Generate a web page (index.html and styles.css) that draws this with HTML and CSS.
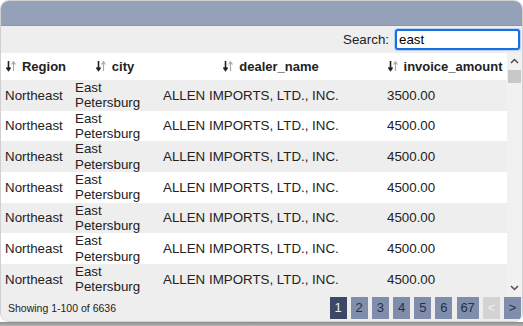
FILE: index.html
```
<!DOCTYPE html>
<html lang="en">
<head>
  <meta charset="UTF-8" />
  <title>Invoices by Dealer</title>
  <link rel="stylesheet" href="styles.css">
</head>
<body>
  <div class="grid">
    <div class="grid-title"></div>

    <div class="toolbar">
      <label for="search">Search:</label>
      <input type="text" id="search" class="search-box" value="east" />
    </div>

    <div class="grid-body">
      <div class="grid-scroll">
        <table class="data-table">
          <colgroup>
            <col class="col-region">
            <col class="col-city">
            <col class="col-dealer">
            <col class="col-amount">
          </colgroup>
          <thead>
            <tr>
              <th><span class="sort-icon"><svg width="10" height="12" viewBox="0 0 10 12"><path d="M2.5 1v9M0.5 7.5l2 2.8 2-2.8" stroke="#222" stroke-width="1.6" fill="none"/><path d="M7.5 11V2M5.5 4.5l2-2.8 2 2.8" stroke="#aaa" stroke-width="1.2" fill="none"/></svg></span>Region</th>
              <th><span class="sort-icon"><svg width="10" height="12" viewBox="0 0 10 12"><path d="M2.5 1v9M0.5 7.5l2 2.8 2-2.8" stroke="#222" stroke-width="1.6" fill="none"/><path d="M7.5 11V2M5.5 4.5l2-2.8 2 2.8" stroke="#aaa" stroke-width="1.2" fill="none"/></svg></span>city</th>
              <th><span class="sort-icon"><svg width="10" height="12" viewBox="0 0 10 12"><path d="M2.5 1v9M0.5 7.5l2 2.8 2-2.8" stroke="#222" stroke-width="1.6" fill="none"/><path d="M7.5 11V2M5.5 4.5l2-2.8 2 2.8" stroke="#aaa" stroke-width="1.2" fill="none"/></svg></span>dealer_name</th>
              <th><span class="sort-icon"><svg width="10" height="12" viewBox="0 0 10 12"><path d="M2.5 1v9M0.5 7.5l2 2.8 2-2.8" stroke="#222" stroke-width="1.6" fill="none"/><path d="M7.5 11V2M5.5 4.5l2-2.8 2 2.8" stroke="#aaa" stroke-width="1.2" fill="none"/></svg></span>invoice_amount</th>
            </tr>
          </thead>
          <tbody id="rows">
            <!-- rows filled in by the script below -->
          </tbody>
        </table>
      </div>

      <div class="scrollbar">
        <span class="sb-button"><svg width="9" height="6" viewBox="0 0 9 6"><path d="M1 5l3.5-3.5L8 5" stroke="#505050" stroke-width="1.5" fill="none"/></svg></span>
        <span class="sb-thumb"></span>
        <span class="sb-track"></span>
        <span class="sb-button"><svg width="9" height="6" viewBox="0 0 9 6"><path d="M1 1l3.5 3.5L8 1" stroke="#505050" stroke-width="1.5" fill="none"/></svg></span>
      </div>
    </div>

    <div class="grid-footer">
      <span class="summary">Showing 1-100 of 6636</span>
      <div class="pager">
        <span class="page active">1</span>
        <span class="page">2</span>
        <span class="page">3</span>
        <span class="page">4</span>
        <span class="page">5</span>
        <span class="page">6</span>
        <span class="page wide">67</span>
        <span class="page disabled">&lt;</span>
        <span class="page">&gt;</span>
      </div>
    </div>
  </div>
  <div class="page-edge"></div>

  <script>
    // rows currently in view of the first page
    const amounts = [3500, 4500, 4500, 4500, 4500, 4500, 4500];
    const tbody = document.getElementById("rows");

    amounts.forEach(amount => {
      tbody.innerHTML += `
        <tr>
          <td>Northeast</td>
          <td>East Petersburg</td>
          <td>ALLEN IMPORTS, LTD., INC.</td>
          <td>${amount.toFixed(2)}</td>
        </tr>
      `;
    });
  </script>
</body>
</html>
```

FILE: styles.css
```
body {
  margin: 0;
  padding: 0;
  background: #fff;
  font-family: 'Liberation Sans', Arial, sans-serif;
  color: #222;
}

.grid {
  height: 320px;
  display: flex;
  flex-direction: column;
  border: 1px solid #d0d0d0;
  border-radius: 9px;
  overflow: hidden;
  background: #fff;
}

.grid-title {
  height: 24px;
  flex: none;
  background: #95a1b8;
  border-bottom: 1px solid #8a95ab;
}

.toolbar {
  height: 27px;
  flex: none;
  display: flex;
  align-items: center;
  justify-content: flex-end;
  gap: 6px;
  padding-right: 2px;
  background: #eee;
  font-size: 13.33px;
}

.search-box {
  width: 117px;
  height: 15px;
  padding: 1px 2px;
  font-family: inherit;
  font-size: 13.33px;
  color: #000;
  border: 2px solid #1a6ee0;
  border-radius: 3px;
  box-shadow: 0 0 0 1px #b9d3f5;
  outline: none;
}

.grid-body {
  flex: 1;
  display: flex;
  min-height: 0;
}

.grid-scroll {
  flex: 1;
  overflow: hidden;
}

.data-table {
  width: 506px;
  table-layout: fixed;
  border-collapse: collapse;
  font-size: 13.33px;
}

.col-region { width: 70px; }
.col-city { width: 88px; }
.col-dealer { width: 224px; }
.col-amount { width: 124px; }

.data-table th {
  height: 27px;
  padding: 0;
  text-align: center;
  font-size: 13px;
  font-weight: 700;
  background: #fff;
  white-space: nowrap;
}

.sort-icon {
  display: inline-block;
  vertical-align: -1px;
  margin-right: 6px;
}

.data-table td {
  padding: 0 4px;
  line-height: 15.33px;
  text-align: left;
  vertical-align: middle;
}

.data-table tbody tr:nth-child(odd) {
  background: #eee;
}

.scrollbar {
  width: 15px;
  flex: none;
  display: flex;
  flex-direction: column;
  background: #f1f1f1;
}

.sb-button {
  height: 15px;
  display: flex;
  align-items: center;
  justify-content: center;
}

.sb-thumb {
  height: 13px;
  margin: 2px 1px 0;
  background: #c8c8c8;
}

.sb-track {
  flex: 1;
}

.grid-footer {
  height: 26px;
  flex: none;
  display: flex;
  align-items: center;
  justify-content: space-between;
  padding: 0 1px 0 7px;
  background: #eee;
}

.summary {
  font-size: 10.5px;
  color: #222;
}

.pager {
  display: flex;
  gap: 4.2px;
}

.page {
  width: 17px;
  padding: 4px 0;
  text-align: center;
  font-size: 13px;
  line-height: 14px;
  color: #26304a;
  background: #808dab;
}

.page.wide {
  width: 22px;
}

.page.active {
  background: #3c4866;
  color: #e8edf5;
}

.page.disabled {
  background: #d3d3d3;
  color: #f2f2f2;
}

.page-edge {
  height: 4px;
  background: linear-gradient(#8c8c8c, #b5b5b5);
}
```
